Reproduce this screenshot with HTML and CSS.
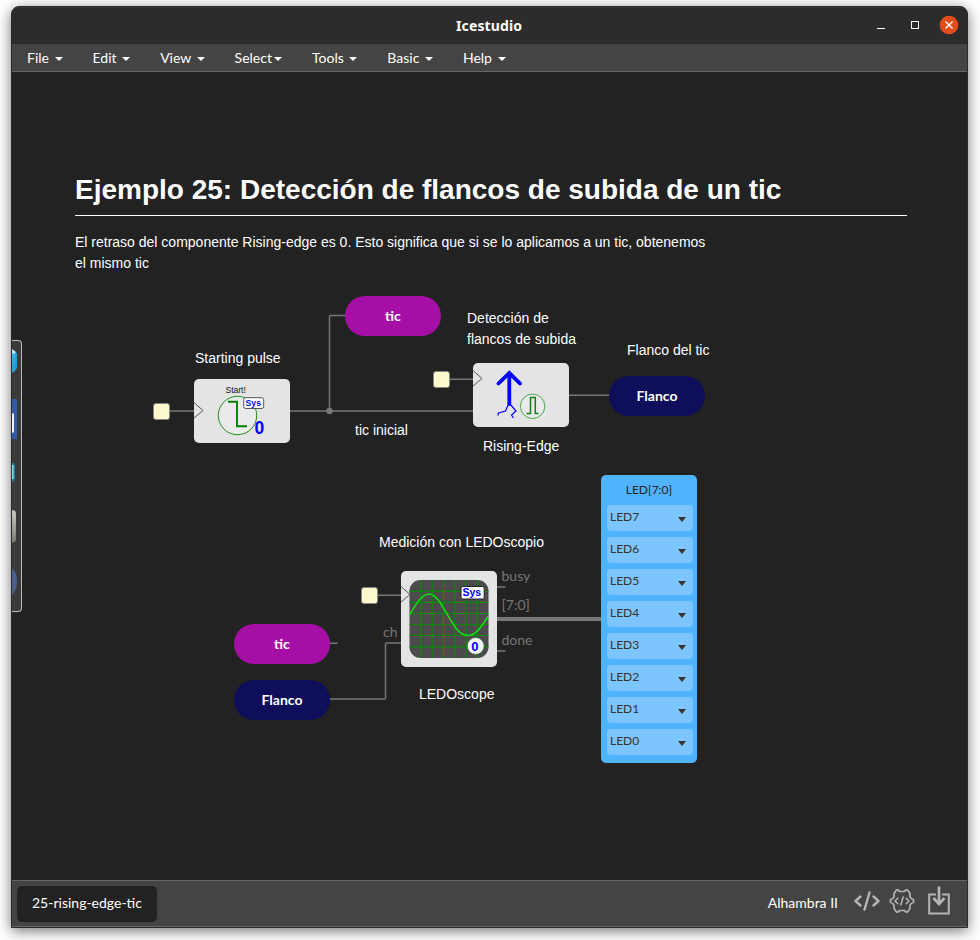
FILE: index.html
```html
<!DOCTYPE html>
<html lang="es">
<head>
<meta charset="utf-8">
<title>Icestudio</title>
<link rel="stylesheet" href="styles.css">
</head>
<body>
<div class="window">
  <header class="titlebar">
    <span class="title">Icestudio</span>
    <div class="controls">
      <svg width="10" height="10" viewBox="0 0 10 10"><path d="M1 7.5h8" stroke="#fff"/></svg>
      <svg width="10" height="10" viewBox="0 0 10 10"><rect x="1.5" y=".5" width="7" height="7" fill="none" stroke="#fff"/></svg>
      <svg width="20" height="20" viewBox="0 0 20 20"><circle cx="10" cy="9" r="9.300" fill="#e24c1a"/><path d="M6.500 5.500l7 7M13.500 5.500l-7 7" stroke="#fff" stroke-width="1.400"/></svg>
    </div>
  </header>
  <nav class="menu">
    <a>File <i class="caret"></i></a>
    <a>Edit <i class="caret"></i></a>
    <a>View <i class="caret"></i></a>
    <a>Select<i class="caret"></i></a>
    <a>Tools <i class="caret"></i></a>
    <a>Basic <i class="caret"></i></a>
    <a>Help <i class="caret"></i></a>
  </nav>
  <main class="canvas">
    <svg class="wires" width="955" height="808" viewBox="12 72 955 808" fill="none" stroke="#777" stroke-width="1.5">
      <path d="M169 411H194M290 411H473M329.500 411V316.500Q329.500 315.500 330.500 315.500H346M449 379.300H473M569 395.300H610M329 643.200H337.500M329 699H384.500Q385.500 699 385.500 698V644Q385.500 643 386.500 643H401M377 595.200H401M497 587H505.500M497 651H505.500"/>
      <path d="M497 619H601" stroke-width="4"/>
      <circle cx="329.500" cy="411" r="3.200" fill="#777" stroke="none"/>
    </svg>

    <section class="intro">
      <h1>Ejemplo 25: Detección de flancos de subida de un tic</h1>
      <p>El retraso del componente Rising-edge es 0. Esto significa que si se lo aplicamos a un tic, obtenemos<br>el mismo tic</p>
    </section>

    <p class="note n-start">Starting pulse</p>
    <p class="note n-inicial">tic inicial</p>
    <p class="note n-detect">Detección de<br>flancos de subida</p>
    <p class="note n-flanco">Flanco del tic</p>
    <p class="note n-rising">Rising-Edge</p>
    <p class="note n-medicion">Medición con LEDOscopio</p>
    <p class="note n-scope">LEDOscope</p>

    <span class="port p-busy">busy</span>
    <span class="port p-bus">[7:0]</span>
    <span class="port p-done">done</span>
    <span class="port p-ch">ch</span>

    <i class="clock c-start"></i>
    <i class="clock c-rising"></i>
    <i class="clock c-scope"></i>

    <div class="label purple l-tic-out">tic</div>
    <div class="label navy l-flanco-out">Flanco</div>
    <div class="label purple l-tic-in">tic</div>
    <div class="label navy l-flanco-in">Flanco</div>

    <div class="block b-start">
      <svg width="96" height="64" viewBox="0 0 96 64">
        <path d="M0 23.500L9 31.500L0 39" fill="none" stroke="#555"/>
        <circle cx="43.500" cy="36.500" r="19.200" fill="#eaeaea" stroke="#209020" stroke-width="1"/>
        <path d="M34 22.700H43V47.300H53" fill="none" stroke="#008000" stroke-width="1.900"/>
        <text x="31.500" y="14" class="t-start">Start!</text>
        <rect x="49.700" y="18.700" width="20" height="10.800" rx="2" fill="#fff" stroke="#555" stroke-width="1"/>
        <text x="51.500" y="27" class="t-sys" font-size="8.500" textLength="15.500">Sys</text>
        <text x="60.500" y="54.500" class="t-sys" font-size="17.500">0</text>
      </svg>
    </div>
    <div class="block b-rising">
      <svg width="96" height="64" viewBox="0 0 96 64" fill="none">
        <path d="M0 7.500L9 15.500L0 23" stroke="#555"/>
        <path d="M36.300 41V10.500M25.500 20.500L36.300 10L47 20.500" stroke="#00f" stroke-width="3.800" stroke-linecap="round"/>
        <path d="M35.500 41L32.500 48L25.500 50L24.800 52.500M37 41L43 48L38.500 52L40.500 55" stroke="#00f" stroke-width="1.200"/>
        <circle cx="59.600" cy="43.300" r="12.200" fill="#eaeaea" stroke="#4aa54a"/>
        <path d="M53.500 50.500H57.500V34.500H62.300V50.500H65.500" stroke="#108010" stroke-width="1.500"/>
      </svg>
    </div>
    <div class="block b-scope">
      <svg width="96" height="96" viewBox="0 0 96 96" fill="none">
        <defs><clipPath id="screen"><rect x="8.500" y="9" width="79" height="78" rx="11"/></clipPath></defs>
        <rect x="8.500" y="9" width="79" height="78" rx="11" fill="#4d4a4d"/>
        <g clip-path="url(#screen)">
          <path d="M20 9V87M31.300 9V87M42.500 9V87M53.800 9V87M65 9V87M76 9V87M8 20.300H88M8 31.300H88M8 42.500H88M8 53.500H88M8 64.500H88M8 75.800H88" stroke="#078a07" stroke-width="1.200"/>
          <path d="M8.500 44C15 33 21 23 28 23C42 23 50 64.500 67 64.500C75 64.500 81 55 88 44" stroke="#0be60b" stroke-width="1.500"/>
        </g>
        <path d="M0 15.500L9 23.500L0 31" stroke="#555"/>
        <rect x="60" y="15.500" width="23.200" height="12.500" rx="1.800" fill="#fff" stroke="#222"/>
        <text x="61.500" y="25" class="t-sys" font-size="10.500" textLength="18.500">Sys</text>
        <circle cx="74.700" cy="75" r="8.500" fill="#f4f4f4" stroke="#1c661c" stroke-width=".7"/>
        <text x="70.200" y="79.700" class="t-sys" font-size="13">0</text>
      </svg>
    </div>

    <div class="leds">
      <div class="leds-title">LED[7:0]</div>
      <div class="led">LED7</div>
      <div class="led">LED6</div>
      <div class="led">LED5</div>
      <div class="led">LED4</div>
      <div class="led">LED3</div>
      <div class="led">LED2</div>
      <div class="led">LED1</div>
      <div class="led">LED0</div>
    </div>

    <div class="dock">
      <svg width="10" height="270" viewBox="0 0 10 270">
        <defs>
          <linearGradient id="cyan" x2="1" y2="1"><stop offset="0" stop-color="#35b9ef"/><stop offset="1" stop-color="#1592d0"/></linearGradient>
          <linearGradient id="silver" x2="0" y2="1"><stop offset="0" stop-color="#c9cac5"/><stop offset="1" stop-color="#777970"/></linearGradient>
        </defs>
        <path d="M0 10L5 12V27Q4 30 0 32Z" fill="url(#cyan)"/><path d="M0 8L4 11L2 13L0 12Z" fill="#b5ecff"/>
        <path d="M0 58H5V98H0Z" fill="#315baa"/><path d="M0 72Q2 72 2 74V90Q2 92 0 92Z" fill="#eef2fa"/>
        <path d="M0 122H2Q3 123 3 125V138Q3 140 0 141Z" fill="#207d96"/><path d="M0 124H1.500V138H0Z" fill="#8be0ee"/>
        <path d="M0 169Q4 169 4 173V198Q4 201 0 202Z" fill="url(#silver)"/>
        <path d="M0 227Q5 231 5 241Q5 249 0 254Z" fill="#49608c"/>
      </svg>
    </div>
  </main>
  <footer class="footer">
    <div class="tab">25-rising-edge-tic</div>
    <div class="status">
      <span class="board">Alhambra II</span>
      <svg class="i-code" width="26" height="22" viewBox="0 0 26 22" fill="none" stroke="#b5b5b5" stroke-width="2.400" stroke-linecap="round" stroke-linejoin="round"><path d="M6.500 6.500L1.500 11L6.500 15.500M19.500 6.500L24.500 11L19.500 15.500M15.500 2.500L10.500 19.500"/></svg>
      <svg class="i-gear" width="26" height="26" viewBox="0 0 26 26" fill="none" stroke="#b5b5b5" stroke-width="1.700" stroke-linecap="round" stroke-linejoin="round"><path d="M24.500 11.500V14.500Q20 15.500 21 20.500L18.500 24Q16.500 24.500 15.500 22.500H10.500Q9.500 24.500 7.500 24L5 20.500Q6 15.500 1.500 14.500V11.500Q6 10.500 5 5.500L7.500 2Q9.500 1.500 10.500 3.500H15.500Q16.500 1.500 18.500 2L21 5.500Q20 10.500 24.500 11.500Z"/><path d="M8.800 10.300L6 13L8.800 15.700M17.200 10.300L20 13L17.200 15.700M14.200 9L11.800 17" stroke-width="1.500"/></svg>
      <svg class="i-load" width="22" height="29" viewBox="0 0 22 29" fill="none" stroke="#b5b5b5" stroke-width="2"><path d="M8 8.500H1.200V27.500H20.800V8.500H14"/><path d="M11 .5V17M5.500 12L11 18L16.500 12" stroke-width="2.700"/></svg>
    </div>
  </footer>
</div>
</body>
</html>
```
FILE: styles.css
```css
* { box-sizing: border-box; }
html, body { height: 100%; }
body {
  margin: 0;
  padding: 6px 12px 12px 11px;
  background: #fff;
  overflow: hidden;
  font-family: Lato, sans-serif;
  font-size: 14px;
  color: #fff;
}
.window {
  height: 922px;
  display: flex;
  flex-direction: column;
  background: #2c2c2c;
  border: 1px solid #2a2a2a;
  border-radius: 8px 8px 0 0;
  overflow: hidden;
  box-shadow: 0 3px 14px rgba(0, 0, 0, .55);
}
.titlebar {
  height: 37px;
  display: flex;
  align-items: center;
  justify-content: center;
  border-top: 1px solid #383838;
  border-bottom: 1px solid #242424;
  flex: none;
}
.title { flex: 1; padding-left: 444px; font: bold 14px/20px "Noto Sans", sans-serif; letter-spacing: .12px; }
.controls { display: flex; align-items: center; gap: 24px; padding-right: 8px; }
.controls svg:last-child { margin-left: -5px; }
.menu {
  height: 28px;
  flex: none;
  display: flex;
  background: #444;
  border-bottom: 1px solid #666;
}
.menu a { padding: 0 15px; line-height: 28px; white-space: pre; }
.caret {
  display: inline-block;
  margin-left: 2px;
  vertical-align: middle;
  border: 4px solid transparent;
  border-top-color: #fff;
  border-bottom: 0;
}
.canvas { position: relative; height: 808px; flex: none; background: #222; overflow: hidden; }
.wires { position: absolute; left: 0; top: 0; }
.intro { position: absolute; left: 63px; top: 97px; width: 832px; font-family: "Liberation Sans", sans-serif; }
.intro h1 { margin: 0 0 16px; height: 47px; font-size: 28px; line-height: 42px; border-bottom: 1px solid #fff; }
.intro p { margin: 0; line-height: 21px; }
.note { position: absolute; margin: 0; font: 14px/21px "Liberation Sans", sans-serif; white-space: nowrap; }
.n-start { left: 183px; top: 276px; }
.n-inicial { left: 343px; top: 348px; }
.n-detect { left: 455px; top: 236px; }
.n-flanco { left: 615px; top: 268px; }
.n-rising { left: 471px; top: 364px; }
.n-medicion { left: 367px; top: 460px; }
.n-scope { left: 407px; top: 612px; }
.port { position: absolute; line-height: 18px; color: #777; }
.p-busy { left: 489.500px; top: 495px; }
.p-bus { left: 489.500px; top: 524px; }
.p-done { left: 489.500px; top: 559px; }
.p-ch { left: 371px; top: 551px; }
.clock { position: absolute; width: 17px; height: 17px; background: #fcfacd; border: 1px solid #888; border-radius: 3px; }
.c-start { left: 141px; top: 330.500px; }
.c-rising { left: 421px; top: 298.500px; }
.c-scope { left: 349px; top: 514.500px; }
.label { position: absolute; width: 96px; height: 40px; border-radius: 20px; font-weight: bold; line-height: 40px; text-align: center; letter-spacing: 0; }
.purple { background: #a60fa6; }
.navy { background: #0f0e5a; }
.l-tic-out { left: 333px; top: 224px; }
.l-flanco-out { left: 597px; top: 304px; }
.l-tic-in { left: 222px; top: 552px; }
.l-flanco-in { left: 222px; top: 608px; }
.block { position: absolute; width: 96px; height: 64px; background: #e4e4e4; border-radius: 5px; }
.block svg { display: block; }
.b-start { left: 182px; top: 307px; }
.b-rising { left: 461px; top: 291px; }
.b-scope { left: 389px; top: 499px; height: 96px; }
.t-start { font: 8.5px "Liberation Sans", sans-serif; fill: #111; }
.t-sys { font-family: "Liberation Sans", sans-serif; font-weight: bold; fill: #00f; }
.leds {
  position: absolute;
  left: 589px;
  top: 403px;
  width: 96px;
  height: 288px;
  padding: 0 4px 0 6px;
  background: #50b3ff;
  border-radius: 5px;
  color: #333;
  font-size: 12px;
}
.leds-title { height: 30px; padding-right: 2px; line-height: 30px; text-align: center; color: #222; }
.led {
  display: flex;
  align-items: center;
  justify-content: space-between;
  height: 26px;
  margin-bottom: 6px;
  padding: 0 7px 3px 3px;
  background: #7cc5ff;
  border-radius: 4px;
}
.led::after { content: ""; margin-top: 6px; border: 4.5px solid transparent; border-top: 5px solid #333; border-bottom: 0; }
.dock {
  position: absolute;
  left: 0;
  top: 268px;
  width: 10px;
  height: 272px;
  background: #3a3a3a;
  border: 1px solid #bbb;
  border-left: 0;
  border-radius: 0 4px 4px 0;
}
.dock svg { display: block; }
.footer {
  height: 47px;
  flex: none;
  display: flex;
  align-items: center;
  justify-content: space-between;
  padding: 0 17px 0 5px;
  background: #444;
  border-top: 1px solid #666;
  border-bottom: 1px solid #666;
}
.tab { height: 36px; width: 140px; padding-left: 15px; line-height: 34px; background: #222; border-radius: 5px; margin-top: 1px; }
.status { display: flex; align-items: center; margin-top: -2px; }
.board { margin-right: 16px; }
.i-code { margin: -4px 9px 0 0; }
.i-gear { margin: -4px 13px 0 0; }
.i-load { margin-top: -4px; }
```
